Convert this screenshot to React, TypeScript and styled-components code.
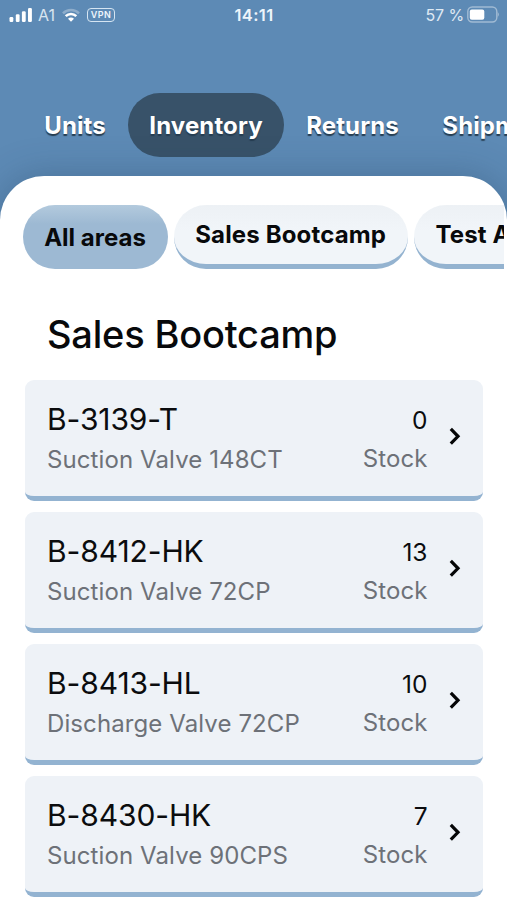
import React from "react";
import styled, { createGlobalStyle, css } from "styled-components";

const GlobalStyle = createGlobalStyle`
  *, *::before, *::after { box-sizing: border-box; }
  html, body { margin: 0; padding: 0; }
  body { overflow: hidden; font-family: Inter, "Liberation Sans", sans-serif; color: #0b0c0e; }
`;

const Screen = styled.div`
  width: 507px;
  height: 900px;
  overflow: hidden;
  display: flex;
  flex-direction: column;
  background: #5d8ab5;
`;

const StatusBar = styled.header`
  height: 30px;
  flex: none;
  display: grid;
  grid-template-columns: 1fr auto 1fr;
  align-items: center;
  padding: 0 8px 0 9px;
  color: #edf5fb;
  font-size: 16px;
  line-height: 20px;
`;

const StatusGroup = styled.div<{ $end?: boolean }>`
  display: flex;
  align-items: center;
  justify-content: ${(p) => (p.$end ? "flex-end" : "flex-start")};
  svg { display: block; flex: none; }
`;

const Carrier = styled.span`
  margin: 0 7px 0 5px;
  opacity: 0.85;
`;

const Clock = styled.time`
  font-weight: 600;
  font-size: 16.5px;
  letter-spacing: 0.4px;
`;

const VpnBadge = styled.span`
  margin-left: 7px;
  width: 28px;
  height: 14px;
  border: 1.3px solid #d5e5f2;
  border-radius: 4px;
  font-size: 9px;
  font-weight: 600;
  line-height: 12px;
  letter-spacing: 0.4px;
  text-align: center;
`;

const Battery = styled.span`
  margin-right: 3px;
  opacity: 0.9;
  letter-spacing: -0.1px;
`;

const Nav = styled.nav`
  height: 146px;
  flex: none;
  display: flex;
  align-items: flex-start;
  padding: 63px 0 0 22.5px;
`;

const NavTab = styled.a<{ $active?: boolean }>`
  flex: none;
  height: 64px;
  padding: 0 21.7px;
  border-radius: 32px;
  color: #fff;
  font-size: 24px;
  font-weight: 700;
  line-height: 65px;
  letter-spacing: 0.13px;
  text-shadow: 0 2px 1px #263d51;
  background: ${(p) => (p.$active ? "#385269" : "transparent")};
`;

const Panel = styled.main`
  flex: 1;
  min-height: 0;
  overflow: hidden;
  padding-top: 29px;
  background: #fff;
  border-radius: 44px 44px 0 0;
  box-shadow: 0 0 36px rgba(35, 65, 95, 0.34);
`;

const Areas = styled.div`
  display: flex;
  gap: 6px;
  height: 64px;
  margin-right: 3px;
  padding-left: 22.5px;
  overflow: hidden;
`;

const AreaPill = styled.button<{ $active?: boolean }>`
  flex: none;
  height: 64px;
  padding: 0 21.7px;
  border: 0;
  border-radius: 32px;
  font: 700 24px/60px Inter, sans-serif;
  letter-spacing: 0.15px;
  color: #08090b;
  ${(p) =>
    p.$active
      ? css`
          padding-top: 2px;
          letter-spacing: 0;
          background: linear-gradient(#b3cadd 0, #9db9d3 19px);
        `
      : css`
          border-bottom: 5px solid #94b3d0;
          background: linear-gradient(#edf1f5, #f1f5f9 45%);
        `}
`;

const Heading = styled.h1`
  margin: 40px 0 0 47px;
  height: 51px;
  font-size: 38px;
  font-weight: 500;
  line-height: 50px;
  letter-spacing: -0.2px;
  color: #08090b;
`;

const Parts = styled.ul`
  list-style: none;
  margin: 20px 24px 0 25px;
  padding: 0;
  display: flex;
  flex-direction: column;
  gap: 11px;
`;

const PartCard = styled.li`
  height: 121px;
  flex: none;
  display: grid;
  grid-template-columns: 1fr auto 12px;
  column-gap: 21px;
  padding: 19px 22px 0 22px;
  border-radius: 9px;
  border-bottom: 5px solid #93b3d1;
  background: #eef2f7;
`;

const Code = styled.div`
  font-size: 30px;
  line-height: 41px;
  height: 40px;
  letter-spacing: -0.1px;
  white-space: nowrap;
`;

const Label = styled.div`
  font-size: 24px;
  font-weight: 370;
  line-height: 41px;
  letter-spacing: 0.1px;
  color: #6d7178;
  white-space: nowrap;
`;

const Stock = styled.div`
  margin-right: 0.5px;
  text-align: right;
`;

const Count = styled.div`
  font-size: 24.5px;
  line-height: 43px;
  height: 39px;
`;

const Chevron = styled.svg`
  margin-top: 28px;
`;

const parts = [
  { code: "B-3139-T", name: "Suction Valve 148CT", stock: 0 },
  { code: "B-8412-HK", name: "Suction Valve 72CP", stock: 13 },
  { code: "B-8413-HL", name: "Discharge Valve 72CP", stock: 10 },
  { code: "B-8430-HK", name: "Suction Valve 90CPS", stock: 7 },
];

export default function App() {
  return (
    <Screen>
      <GlobalStyle />
      <StatusBar>
        <StatusGroup>
          <svg width="24" height="16" viewBox="0 0 24 16" fill="#fff">
            <rect x="0.5" y="10" width="3.8" height="5" rx="1.2" />
            <rect x="6.8" y="7.2" width="3.8" height="7.8" rx="1.2" />
            <rect x="12.9" y="4.2" width="3.8" height="10.8" rx="1.2" />
            <rect x="19" y="1" width="3.9" height="14" rx="1.2" />
          </svg>
          <Carrier>A1</Carrier>
          <svg width="18" height="15" viewBox="0 0 18 15" fill="none">
            <path d="M1 5.3C5.4 .9 12.6 .9 17 5.3" stroke="#fff" strokeOpacity=".3" strokeWidth="2.5" />
            <path d="M3.7 8.1C6.7 5.2 11.3 5.2 14.3 8.1" stroke="#fff" strokeWidth="2.6" />
            <path d="M6 10.8C7.7 9.2 10.3 9.2 12 10.8L9 13.8Z" fill="#fff" />
          </svg>
          <VpnBadge>VPN</VpnBadge>
        </StatusGroup>
        <Clock>14:11</Clock>
        <StatusGroup $end>
          <Battery>57 %</Battery>
          <svg width="32" height="18" viewBox="0 0 32 18">
            <rect x=".8" y="1" width="29" height="15" rx="4.5" fill="none" stroke="#fff" strokeOpacity=".42" strokeWidth="1.4" />
            <rect x="2.8" y="3.5" width="14.5" height="10.2" rx="2" fill="#fff" />
            <path d="M30.8 6Q32.6 8.5 30.8 11Z" fill="#fff" fillOpacity=".5" />
          </svg>
        </StatusGroup>
      </StatusBar>
      <Nav>
        <NavTab>Units</NavTab>
        <NavTab $active>Inventory</NavTab>
        <NavTab>Returns</NavTab>
        <NavTab>Shipments</NavTab>
      </Nav>
      <Panel>
        <Areas>
          <AreaPill $active>All areas</AreaPill>
          <AreaPill>Sales Bootcamp</AreaPill>
          <AreaPill>Test Area</AreaPill>
        </Areas>
        <Heading>Sales Bootcamp</Heading>
        <Parts>
          {parts.map((part) => (
            <PartCard key={part.code}>
              <div>
                <Code>{part.code}</Code>
                <Label>{part.name}</Label>
              </div>
              <Stock>
                <Count>{part.stock}</Count>
                <Label>Stock</Label>
              </Stock>
              <Chevron width="12" height="18" viewBox="0 0 12 18" fill="none" stroke="#050607" strokeWidth="3.2">
                <path d="M1.8 1.9L9 9.3L1.8 16.7" />
              </Chevron>
            </PartCard>
          ))}
        </Parts>
      </Panel>
    </Screen>
  );
}
